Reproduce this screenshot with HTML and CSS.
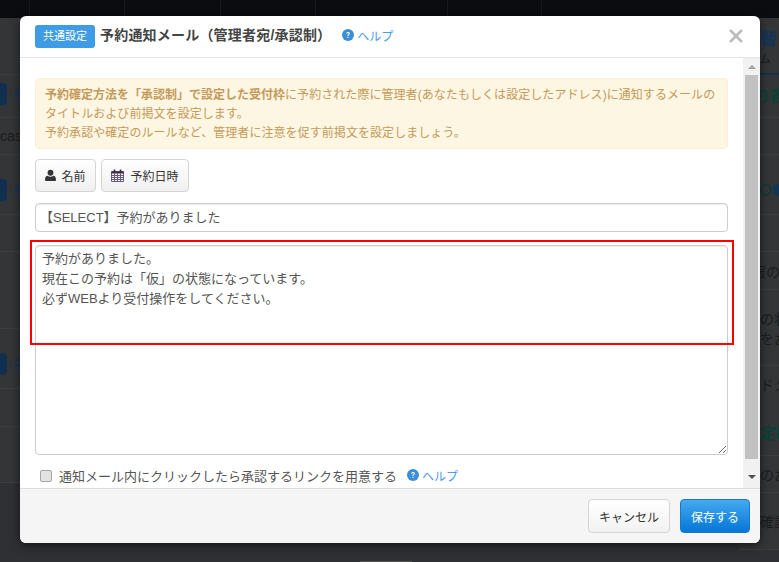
FILE: index.html
```html
<!DOCTYPE html>
<html lang="ja">
<head>
<meta charset="utf-8">
<title>予約通知メール</title>
<link rel="stylesheet" href="styles.css">
</head>
<body>
<div class="page">
  <div class="topbar">
    <span class="tc c1"></span><span class="tc c2"></span><span class="tc c3"></span><span class="tc c2"></span><span class="tc c4"></span><span class="tc c5"></span>
  </div>
  <div class="under">
    <div class="strip left">
      <div class="row"></div>
      <div class="row up4"><i class="chip"></i><b class="navy">予</b></div>
      <div class="row"><span class="dim">cas</span></div>
      <div class="row down10"><i class="chip"></i><b class="navy">予</b></div>
      <div class="row"></div>
      <div class="row"></div>
      <div class="row down10"><i class="chip"></i><b class="navy">予</b></div>
      <div class="row"></div>
      <div class="row"></div>
      <div class="row last"></div>
    </div>
    <div class="strip right">
      <div class="row navyline"><span class="stack shift-in"><b class="navy big">替</b><span class="dim small">ム</span></span></div>
      <div class="row up4"><b class="teal big">の各</b></div>
      <div class="row"></div>
      <div class="row down10 shift-in"><i class="dot teal-dot"></i><i class="dot"></i></div>
      <div class="row"></div>
      <div class="row"><span class="dim">報の文</span></div>
      <div class="row"><span class="stack shift-in"><span class="dim">の状</span><span class="dim">をお</span></span></div>
      <div class="row top"><span class="stack gap shift-in"><span class="dim">ドメ</span><b class="teal">定時</b></span></div>
      <div class="row"><span class="dim shift-in">のお</span></div>
      <div class="row"><span class="dim shift-in">確認</span></div>
      <div class="row last"></div>
    </div>
  </div>
</div>
<div class="peek"></div>

<div class="modal">
  <header class="mhead">
    <span class="badge">共通設定</span>
    <h1 class="mtitle">予約通知メール（管理者宛/承認制）</h1>
    <a class="help help-head"><svg class="qicon" viewBox="0 0 12 12"><circle cx="6" cy="6" r="6" fill="#3b8fd9"/><path d="M4.2 4.7c0-1.1.8-1.8 1.9-1.8s1.8.7 1.8 1.6c0 1.400-1.500 1.400-1.500 2.500H5.500c0-1.600 1.300-1.600 1.300-2.400 0-.4-.3-.7-.8-.7s-.8.3-.8.8z" fill="#fff"/><rect x="5.400" y="7.700" width="1.100" height="1.200" fill="#fff"/></svg>ヘルプ</a>
    <svg class="close" viewBox="0 0 14 14"><path d="M1 1l12 12M13 1L1 13" stroke="#bbb" stroke-width="2.600" fill="none"/></svg>
  </header>
  <div class="mbody">
    <div class="content">
      <div class="alert"><b>予約確定方法を「承認制」で設定した受付枠</b>に予約された際に管理者(あなたもしくは設定したアドレス)に通知するメールのタイトルおよび前掲文を設定します。<br>予約承認や確定のルールなど、管理者に注意を促す前掲文を設定しましょう。</div>
      <div class="tools">
        <button class="btn btn-name"><svg class="ico" viewBox="0 0 12 13"><circle cx="6" cy="3.500" r="3.200" fill="#333"/><path d="M1 12.500c-.6 0-1-.4-1-1 0-2.800.9-4.800 2.800-4.800.9.800 2 1.200 3.200 1.200s2.300-.4 3.200-1.200c1.900 0 2.800 2 2.800 4.800 0 .6-.4 1-1 1z" fill="#333"/></svg>名前</button>
        <button class="btn btn-date"><svg class="ico cal" viewBox="0 0 13 13"><path d="M.5 2.500h12v10H.5zM.5 6.500h12M.5 8.500h12M.5 10.500h12M3.500 4.500v8M6.500 4.500v8M9.500 4.500v8" fill="none" stroke="#6a5a7c"/><path d="M3.500 .5v3M9.500 .5v3" stroke="#3c2a4d" stroke-width="1.600" fill="none"/><rect x=".5" y="2.500" width="12" height="2" fill="#3c2a4d"/></svg>予約日時</button>
      </div>
      <input class="field" type="text" value="【SELECT】予約がありました">
      <div class="areawrap">
        <textarea class="field area">予約がありました。
現在この予約は「仮」の状態になっています。
必ずWEBより受付操作をしてください。</textarea>
        <div class="redbox"></div>
      </div>
      <label class="check"><input type="checkbox" class="cb"><span>通知メール内にクリックしたら承認するリンクを用意する</span>
        <a class="help help-check"><svg class="qicon" viewBox="0 0 12 12"><circle cx="6" cy="6" r="6" fill="#3b8fd9"/><path d="M4.2 4.7c0-1.1.8-1.8 1.9-1.8s1.8.7 1.8 1.6c0 1.400-1.500 1.400-1.500 2.500H5.500c0-1.600 1.300-1.600 1.300-2.400 0-.4-.3-.7-.8-.7s-.8.3-.8.8z" fill="#fff"/><rect x="5.400" y="7.700" width="1.100" height="1.200" fill="#fff"/></svg>ヘルプ</a>
      </label>
    </div>
    <div class="scroll">
      <i class="arrow up"></i>
      <div class="thumb"></div>
      <i class="arrow down"></i>
    </div>
  </div>
  <footer class="mfoot">
    <button class="btn cancel">キャンセル</button>
    <button class="btn save">保存する</button>
  </footer>
</div>
</body>
</html>
```
FILE: styles.css
```css
* { box-sizing: border-box; }
html, body { margin: 0; height: 562px; overflow: hidden; }
body {
  position: relative;
  background: #2f3033;
  font-family: "Liberation Sans", "Noto Sans CJK JP", sans-serif;
  font-size: 12px;
  color: #555;
}

/* dimmed page behind the dialog */
.page { height: 562px; display: flex; flex-direction: column; }
.topbar { height: 18px; background: #0b0c0f; display: flex; flex: none; }
.tc { border-right: 1px solid #17181b; height: 18px; }
.c1 { width: 30px; }
.c2 { width: 95px; }
.c3 { width: 96px; }
.c4 { width: 132px; }
.c5 { width: 94px; }
.under { flex: 1; display: flex; justify-content: space-between; overflow: hidden; }
.strip { display: grid; }
.left { width: 60px; grid-template-rows: 57px 43px 37px 60px 37px 77px 60px 38px 56px 1fr; }
.right { width: 40px; grid-template-rows: 57px 43px 37px 60px 37px 38px 76px 90px 37px 57px 1fr; }
.row {
  background: #343537;
  border-bottom: 1px solid #3c3d40;
  display: flex;
  align-items: center;
  white-space: nowrap;
  overflow: hidden;
  font-size: 16px;
  color: #1a1b1d;
}
.right .row { padding-left: 13px; }
.last { background: #2f3033; border-bottom: 0; }
.up4 { padding-bottom: 4px; }
.down10 { padding-top: 10px; }
.navyline { border-bottom: 2px solid #12304f; }
.chip { width: 7px; height: 22px; background: #11304f; border-radius: 0 4px 4px 0; flex: none; margin-right: 6px; }
.navy { color: #13355a; font-size: 14px; }
.teal { color: #0d4038; }
.big { font-size: 17px; }
.dim { color: #1b1c1e; font-size: 14px; }
.small { font-size: 11px; }
.stack { display: flex; flex-direction: column; }
.gap { gap: 26px; }
.shift-in { margin-left: 8px; }
.top { align-items: flex-start; padding-top: 8px; }
.dot { width: 12px; height: 12px; border-radius: 50%; border: 2px solid #0f3a3a; margin-right: 1px; flex: none; }
.dot + .dot { background: #13355a; border-color: #13355a; }
.peek { position: absolute; left: 360px; top: 561px; width: 52px; height: 1px; background: #555; }

/* dialog */
.modal {
  position: absolute;
  left: 20px;
  top: 16px;
  width: 740px;
  height: 527px;
  background: #fff;
  border-radius: 6px;
  box-shadow: 0 2px 10px rgba(0, 0, 0, .6);
  display: flex;
  flex-direction: column;
  overflow: hidden;
}
.mhead {
  height: 42px;
  flex: none;
  border-bottom: 1px solid #e5e5e5;
  display: flex;
  align-items: center;
  padding: 0 15px 1px;
}
.badge {
  width: 60px;
  height: 23px;
  background: #3e9be4;
  color: #fff;
  border-radius: 3px;
  font-size: 11px;
  line-height: 23px;
  text-align: center;
}
.mtitle { margin: 0 0 2px 5px; font-size: 14px; letter-spacing: .2px; line-height: 20px; font-weight: bold; color: #444; white-space: nowrap; }
.help { color: #4a9be8; font-size: 12px; display: inline-flex; align-items: center; }
.help-head { margin: 0 0 2px 11px; }
.qicon { width: 12px; height: 12px; margin-right: 3px; flex: none; }
.close { width: 14px; height: 14px; margin-left: auto; margin-right: 2px; flex: none; }

.mbody { flex: none; height: 430px; display: flex; overflow: hidden; }
.content { width: 723px; flex: none; padding: 20px 0 0 15px; }
.scroll { width: 17px; background: #f1f1f1; display: flex; flex-direction: column; align-items: center; position: relative; }
.arrow { flex: none; width: 0; height: 0; border-left: 4px solid transparent; border-right: 4px solid transparent; }
.up { border-bottom: 4px solid #a3a3a3; margin: 7px 0 6px; }
.thumb { width: 13px; height: 384px; background: #c1c1c1; }
.down { border-top: 4px solid #505050; margin-top: 16px; }

.alert {
  width: 693px;
  height: 71px;
  background: #fcf6e3;
  border: 1px solid #fbeed5;
  border-radius: 4px;
  color: #c49a58;
  font-size: 12px;
  letter-spacing: .06px;
  line-height: 19px;
  padding: 7px 9px;
}
.alert b { letter-spacing: 0; }
.tools { display: flex; gap: 5px; margin-top: 10px; }
.btn {
  font: inherit;
  height: 33px;
  border: 1px solid #d5d5d5;
  border-radius: 4px;
  background: linear-gradient(#fff, #efefef);
  color: #333;
  display: inline-flex;
  align-items: center;
  justify-content: center;
  padding: 0;
}
.btn-name { width: 61px; }
.btn-date { width: 88px; }
.ico { width: 11px; height: 13px; margin-right: 5px; flex: none; }
.cal { width: 13px; margin-right: 6px; }
.field {
  display: block;
  width: 693px;
  border: 1px solid #ccc;
  border-radius: 4px;
  background: #fff;
  color: #555;
  font: inherit;
  font-size: 13px;
  outline: none;
  box-shadow: inset 0 1px 1px rgba(0, 0, 0, .075);
}
input.field { height: 29px; margin-top: 11px; padding: 0 4px 2px; }
.areawrap { position: relative; margin-top: 13px; height: 210px; }
.area { height: 210px; padding: 3px 6px; line-height: 20px; margin: 0; resize: both; }
.redbox { position: absolute; left: -5px; top: -5px; width: 704px; height: 105px; border: 2px solid #f00; pointer-events: none; }
.check { display: flex; align-items: center; margin-top: 11px; height: 18px; padding-left: 5px; color: #555; font-size: 13px; white-space: nowrap; }
.cb {
  appearance: none;
  width: 12px;
  height: 12px;
  margin: 2px 7px 0 0;
  background: #e3e3e3;
  border: 1px solid #a5a5a5;
  border-radius: 2px;
  flex: none;
}
.help-check { margin-left: 10px; }

.mfoot {
  flex: 1;
  background: #f5f5f5;
  border-top: 1px solid #ddd;
  display: flex;
  justify-content: flex-end;
  align-items: flex-start;
  gap: 10px;
  padding: 10px 10px 0 0;
}
.cancel { width: 82px; height: 34px; background: linear-gradient(#fff, #f2f2f2); }
.save {
  width: 70px;
  height: 34px;
  color: #fff;
  border: 1px solid #1b78c8;
  background: linear-gradient(#45a9ee, #0477d8);
}
```
